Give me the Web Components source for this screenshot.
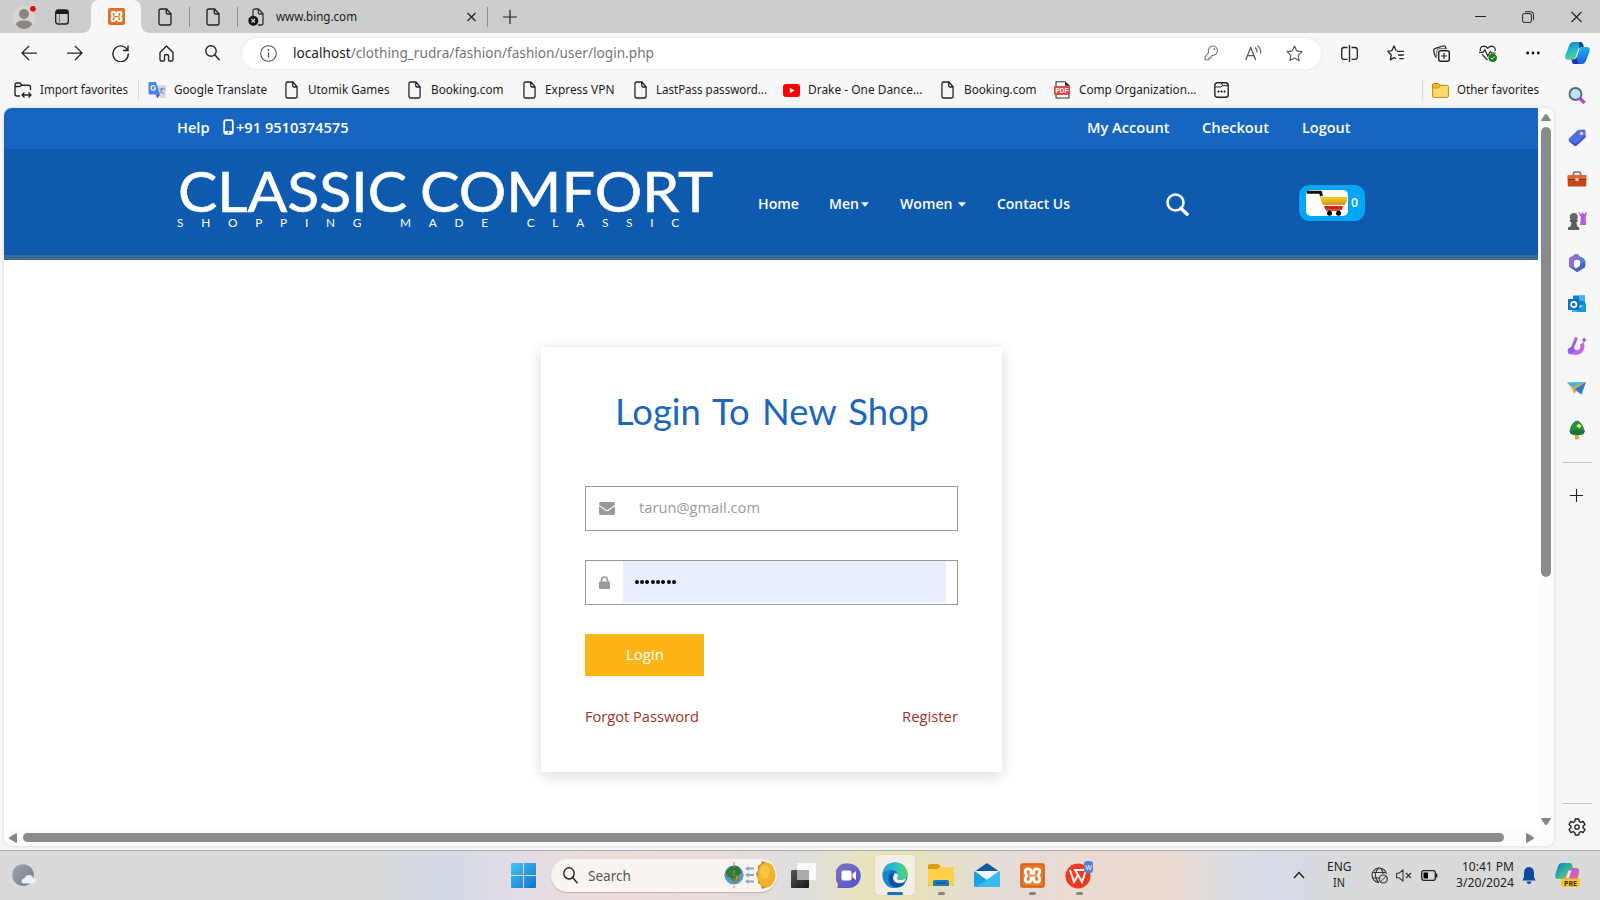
<!DOCTYPE html>
<html lang="en"><head><meta charset="utf-8"><title>Login</title>
<style>
html,body{margin:0;height:100%;overflow:hidden}
body{background:#f7f7f7;font-family:"Noto Sans","Open Sans",sans-serif}
</style></head><body>
<browser-window></browser-window>
<script>
const I={
avatar:[24,24,'<circle cx="12" cy="12.500" r="11.300" fill="#d9d6cf"/><circle cx="12" cy="9" r="5" fill="#8b8682"/><path d="M4 19.500Q4 15.500 12 15.500t8 4Q16.500 24 12 24t-8-4.500Z" fill="#8b8682"/><circle cx="21" cy="3.800" r="3.500" fill="#d40f18" stroke="#f0e5e5"/>'],
tabs:[14,16,'<rect x=".7" y="1" width="12.600" height="14" rx="2.500" fill="none" stroke="#1b1b1b" stroke-width="1.300"/><path d="M1 5V3q0-2 2-2h8q2 0 2 2v2Z" fill="#1b1b1b"/><path d="M4.500 5v10" stroke="#777"/>'],
xampp:[17,17,'<rect width="17" height="17" rx="2" fill="#e9782d"/><rect x="1" y="1" width="15" height="15" rx="1.500" fill="none" stroke="#d5641f"/><path d="M5.500 4Q3 4 3.700 6.500q.3 1 1 2-1 1-1 2Q3 13 5.500 13q2 0 2-1.500V10h2v1.500q0 1.500 2 1.500Q14 13 13.300 10.500q0-1-1-2 .7-1 1-2Q14 4 11.500 4q-2 0-2 1.500V7h-2V5.500Q7.500 4 5.500 4Z" fill="none" stroke="#fff" stroke-width="1.900"/>'],
doc:[14,18,'<path d="M3 1h5.500L13 5.800V15q0 2-2 2H3q-2 0-2-2V3q0-2 2-2ZM8.300 1.200V4.500q0 1.500 1.500 1.500H13" fill="none" stroke="#222" stroke-width="1.350"/>'],
docx:[16,18,'<path d="M5 8V3q0-2 2-2h3.500L15 5.800V15q0 2-2 2H10M10.300 1.200V4.500q0 1.500 1.500 1.500H15" fill="none" stroke="#333" stroke-width="1.300"/><circle cx="5.300" cy="12.700" r="5" fill="#111"/><path d="m3.500 11 3.500 3.500m0-3.500-3.500 3.500" stroke="#ddd" stroke-width="1.200"/>'],
x:[9,10,'<path d="m.5 1 8 8m0-8-8 8" stroke="#222" stroke-width="1.300"/>'],
plus:[14,14,'<path d="M7 0v14M0 7h14" stroke="#222" stroke-width="1.200"/>'],
min:[11,11,'<path d="M0 5.500h11" stroke="#222"/>'],
max:[12,12,'<rect x=".6" y="2.600" width="8.800" height="8.800" rx="1.500" fill="none" stroke="#222"/><path d="M3 .7h5.500q3 0 3 3V9" fill="none" stroke="#222"/>'],
close:[11,12,'<path d="m.5 1 10 10m0-10-10 10" stroke="#222" stroke-width="1.100"/>'],
back:[16,16,'<path d="M16 8H1m7-7L1 8l7 7" fill="none" stroke="#222" stroke-width="1.250"/>'],
fwd:[16,16,'<path d="M0 8h15M8 1l7 7-7 7" fill="none" stroke="#222" stroke-width="1.250"/>'],
reload:[17,18,'<path d="M15.800 7A7.700 7.900 0 1 0 16.300 9.500M16 1.500V6.500H11" fill="none" stroke="#222" stroke-width="1.400"/>'],
home:[15,17,'<path d="M1 7.500 7.500 1 14 7.500V14.500q0 1.500-1.500 1.500H10.500q-1 0-1-1V11q0-1.500-2-1.500t-2 1.500v4q0 1-1 1H2.500Q1 16 1 14.500Z" fill="none" stroke="#222" stroke-width="1.350" stroke-linejoin="round"/>'],
mag:[15,16,'<circle cx="6" cy="6" r="5.200" fill="none" stroke="#222" stroke-width="1.400"/><path d="m9.800 9.800 4.700 5.500" stroke="#222" stroke-width="1.400"/>'],
info:[17,17,'<circle cx="8.500" cy="8.500" r="7.800" fill="none" stroke="#555" stroke-width="1.100"/><path d="M8.500 7.500v5" stroke="#555" stroke-width="1.300"/><circle cx="8.500" cy="5" r=".9" fill="#555"/>'],
key:[14,16,'<path d="M4.800 7.500A4.500 4.700 0 1 1 8.300 10.300L7 11.500V13H5v1.800H1V12Z" fill="none" stroke="#777" stroke-width="1.100" stroke-linejoin="round"/><circle cx="10.300" cy="4.300" r="1" fill="#777"/>'],
aloud:[17,16,'<path d="m.7 15 5-12.500L10.700 15M2.500 10.500h6.500" fill="none" stroke="#555" stroke-width="1.250"/><path d="M10 2.500q2.300 1.500 2 5M12.500.8q3.600 2.500 3.200 7.700" fill="none" stroke="#666" stroke-width="1.200"/>'],
star:[17,17,'<path d="m8.500 1 2.300 4.900 5.200.7-3.800 3.700.9 5.300-4.600-2.500-4.600 2.500.9-5.300L1 6.600l5.200-.7Z" fill="none" stroke="#555" stroke-width="1.100" stroke-linejoin="round"/>'],
split:[17,17,'<path d="M6.500 2.500H3q-2.300 0-2.300 2.300V12q0 2.300 2.300 2.300H6.500M10.500 2.500H14q2.300 0 2.300 2.300V12q0 2.300-2.300 2.300H10.500M8.500 0v17" fill="none" stroke="#222" stroke-width="1.300"/>'],
favs:[17,16,'<path d="m9.300 6-2.300-5-2.200 4.700L.8 6.300l3.400 3.600-.8 5L7 12.500l2 1.200M10 6.300h6.800M11 10h5.800M12.300 13.600h4.500" fill="none" stroke="#222" stroke-width="1.300" stroke-linejoin="round"/>'],
coll:[17,17,'<rect x="5.700" y="5.700" width="10.600" height="10.600" rx="2" fill="none" stroke="#222" stroke-width="1.400"/><path d="M11 8v6M8 11h6M3.800 12.500Q2.500 12 2 10.500L.8 6Q.3 4 2.300 3.400L10 1q2-.6 2.500 1l.6 1.700" fill="none" stroke="#222" stroke-width="1.200"/><path d="M3.700 11V6q0-2.300 2.300-2.300h8" fill="none" stroke="#555" stroke-width=".9"/>'],
heart:[18,17,'<path d="M8.500 15 3 9.300M1.300 6Q.7 1.500 4.800 1.200 7 1.200 8.700 3.300 10.500 1.200 12.700 1.200 16.700 1.500 16.200 6M0 7.300h4l1.800-2.600 3 6.300 2.500-4.500 1.200 1.500h4" fill="none" stroke="#222" stroke-width="1.200"/><circle cx="13.700" cy="12.700" r="4.300" fill="#157c1c"/><path d="m11.700 12.700 1.400 1.500 2.500-2.700" fill="none" stroke="#fff"/>'],
dots:[14,4,'<circle cx="1.700" cy="2" r="1.400"/><circle cx="7" cy="2" r="1.400"/><circle cx="12.300" cy="2" r="1.400"/>'],
copilot:[25,24,'<linearGradient id="a" x2=".4" y2="1"><stop stop-color="#1565d8"/><stop offset=".45" stop-color="#1bb5cf"/><stop offset="1" stop-color="#55d68c"/></linearGradient><linearGradient id="b" y1="0" x2=".3" y2="1"><stop stop-color="#25c5f4"/><stop offset="1" stop-color="#1662e8"/></linearGradient><path d="M8 1h7q2 0 2.500 2L18.500 6h-2.500q-2 0-2.700 2l-3 9q-.7 1.800-2.500 1.800H3Q-.6 18.500.3 14.500L4.500 3.500Q5.500 1 8 1Z" fill="url(#a)"/><path d="M17 23h-7q-2 0-2.500-2L6.500 18.500H9q2 0 2.500-2l3-8.500q.7-2 2.500-2h5Q25.500 6 24.700 10L20.500 20.500Q19.500 23 17 23Z" fill="url(#b)"/><path d="M8.500 23q-1.500-.5-2-4.500h2q2 0 3-2l2 6.500Z" fill="#1b3c9d"/><path d="M14 1h2q1.700 0 2.300 3l.5 2h-2.300q-1.500 0-2.500 2Z" fill="#1444a5"/>'],
import:[18,18,'<path d="M6 15H3q-2 0-2-2V4q0-2 2-2h3l2 2.200h6.500q2 0 2 2V9M1 5.500h4.500L8 4.200" fill="none" stroke="#222" stroke-width="1.350"/><path d="M8 14h9M10.500 11.500 8 14l2.500 2.500m4-5L17 14l-2.500 2.500" fill="none" stroke="#222" stroke-width="1.300"/>'],
gt:[18,18,'<rect x="7" y="4" width="11" height="13" fill="#d5d9df"/><path d="M1 1h7l4 12.500H2q-1.500 0-1.500-1.500V2Q.5 1 1 1Z" fill="#4a86e8"/><path d="M8 13.500h4L9.500 17Z" fill="#2c57c7"/><path d="M7 5.500A2.300 2.300 0 1 0 7.500 7H5.500" fill="none" stroke="#fff" stroke-width="1.100"/><path d="M11.500 8h5.500M14 6.500V8q-.5 3-2 4.500M12.500 9.500q1.500 2.500 3.500 3" fill="none" stroke="#6b84a5"/>'],
yt:[17,13,'<rect width="17" height="13" rx="3" fill="#f00"/><path d="M6.800 3.800v5.400L11.300 6.500Z" fill="#fff"/>'],
pdf:[16,18,'<path d="M2 .7h9L15 4.500V17H2Z" fill="#f7f7f7" stroke="#333" stroke-width="1.100"/><path d="M11 .7v4h4Z" fill="#222"/><rect y="5" width="16" height="9" rx="1" fill="#e04848"/><text x="8" y="12" text-anchor="middle" font-size="6.500" font-weight="700" fill="#fff" font-family="Liberation Sans">PDF</text>'],
box:[15,16,'<rect x=".8" y=".8" width="13.400" height="14.400" rx="2.500" fill="none" stroke="#222" stroke-width="1.400"/><path d="M1 5h6l1.500-1.500L7.500 1M8 3.700h6" stroke="#222" fill="none"/><circle cx="4.500" cy="9.500" r="1"/><circle cx="7.500" cy="9.500" r="1"/><circle cx="10.500" cy="9.500" r="1"/>'],
folder:[17,15,'<path d="M.6 2Q.6.6 2 .6h4.300L8.500 2.300H15q1.400 0 1.400 1.400V13q0 1.400-1.400 1.400H2Q.6 14.400.6 13Z" fill="#ffd96b" stroke="#bc8a18"/><path d="M.6 5h5.700L8.500 2.300 6.300.6H2Q.6.6.6 2Z" fill="#efb72d" stroke="#bc8a18" stroke-width=".8"/>'],
phone:[11,16,'<rect x="1.200" y="1.200" width="8.600" height="13.600" rx="1.500" fill="none" stroke="#fff" stroke-width="1.800"/><path d="M1 12h9v3H1Z" fill="#fff"/><circle cx="5.500" cy="13.500" r=".9" fill="#1665c0"/>'],
caret:[8,5,'<path d="M0 .3h8L4 4.800Z" fill="#fff"/>'],
search:[23,23,'<circle cx="9.500" cy="9.500" r="8" fill="none" stroke="#fff" stroke-width="2.600"/><path d="m15 15.500 6 5.500" stroke="#fff" stroke-width="3.600" stroke-linecap="round"/>'],
cart:[42,26,'<rect width="42" height="26" rx="5" fill="#fff"/><path d="M1 2.200H14.500L15.500 6" fill="none" stroke="#111" stroke-width="3"/><path d="M14 7h27.500L41 10H15Z" fill="#f0c61e"/><path d="M15 9.500h26v2.500H15.500Z" fill="#e6b51c"/><path d="M15.500 12h24.500l-1 3H17Z" fill="#dc9f1c"/><path d="M18 16h19l-1 3.700H19.500Z" fill="#d31f1d"/><path d="M20 20.500h14" stroke="#a34a38"/><circle cx="23.500" cy="23.200" r="2.500"/><circle cx="32.500" cy="23.200" r="2.500"/>'],
mail:[16,13,'<path d="M0 1.500Q0 0 1.500 0h13Q16 0 16 1.500 16 3 14.500 4L8 8.300 1.500 4Q0 3 0 1.500Z" fill="#999"/><path d="M0 4.300 7 9q1 .6 2 0l7-4.700v7.200q0 1.500-1.500 1.500h-13Q0 13 0 11.500Z" fill="#999"/>'],
lock:[11,13,'<rect y="5.500" width="11" height="7.500" rx="1" fill="#999"/><path d="M2.500 6V4.300a3 3.300 0 0 1 6 0V6" fill="none" stroke="#999" stroke-width="1.700"/>'],
up:[10,7,'<path d="M5 0q.6 0 1 .6L9.800 6q.3 1-.6 1H.8Q-.1 7 .2 6L4 .6Q4.400 0 5 0Z" fill="#858585"/>'],
down:[10,7,'<path d="M5 7q.6 0 1-.6L9.800 1q.3-1-.6-1H.8Q-.1 0 .2 1L4 6.400Q4.400 7 5 7Z" fill="#858585"/>'],
left:[8,10,'<path d="M0 5q0-.6.6-1L7 .2Q8-.1 8 .8v8.400q0 .9-1 .6L.6 6Q0 5.600 0 5Z" fill="#858585"/>'],
right:[8,10,'<path d="M8 5q0-.6-.6-1L1 .2Q0-.1 0 .8v8.400q0 .9 1 .6L7.400 6Q8 5.600 8 5Z" fill="#858585"/>'],
s1:[20,20,'<circle cx="8.500" cy="8" r="6" fill="#c1e2f4" stroke="#596571" stroke-width="1.800"/><path d="m12.500 12 5 5" stroke="#b445dc" stroke-width="3.300"/>'],
s2:[20,20,'<path d="M11 2 17 1.500Q18.500 1.500 18.500 3V9L9.500 17.500Q8 18.500 6.500 17L2 13Q1 11.500 2 10.500Z" fill="#4a6fe8"/><path d="m2 12 7 4L18.500 7V9.500L9.500 17.500Q8 18.500 6.500 17L2 13Z" fill="#4449bb"/><circle cx="14.500" cy="5.500" r="1.800" fill="#ffd65c"/>'],
s3:[20,20,'<path d="M6.500 6V4.500Q6.500 3 8 3h4q1.500 0 1.500 1.500V6" fill="none" stroke="#777" stroke-width="1.700"/><rect x=".7" y="6" width="18.600" height="11.500" rx="1.500" fill="#c94818"/><path d="M.7 6h18.600v4H.7Z" fill="#dd6632"/><path d="M.7 10.500h18.600" stroke="#8d2c0e"/><circle cx="10" cy="10.500" r="1.800" fill="#e5d6c8"/>'],
s4:[20,20,'<path d="M11.500 1.500h1.700V3h1.500V1.500h1.800V3h1.500V1.500H20L18.500 7l.7 7h-6l.7-7.500Z" fill="#b85ae0"/><circle cx="6.800" cy="6" r="4" fill="#666"/><path d="M3 9h7.600v2H9.300l1 4.500 2 1V19H1v-2.500l2.500-1 1-4.500H3Z" fill="#5c5c5c"/>'],
s5:[20,20,'<path d="M8 1 17 5.500 18.500 8v5l-6-2V8L5.500 4Z" fill="#4f86d0"/><path d="M9.500.8 2 5v8.500l5 2.500V8.500L12 6V2Z" fill="#8d6fd2"/><path d="M2 13.500 10 19.200l8-4.700V9l-5 1.500v2.500L9 15.200l-2-1.200Z" fill="#4a63c0"/><circle cx="10" cy="10" r="3.200" fill="#f7f7f7"/>'],
s6:[20,20,'<path d="M6 1.500h12v10H6Z" fill="#1680d1"/><path d="M12 1.500h6V7h-6Z" fill="#42b5ee"/><path d="M5 9l7 5 7-5v9H5Z" fill="#33bcee"/><path d="M19 9v9H9Z" fill="#1499dc"/><rect x="1" y="5" width="11.500" height="11" rx="1" fill="#116ec0"/><circle cx="6.700" cy="10.500" r="2.700" fill="none" stroke="#fff" stroke-width="1.700"/>'],
s7:[20,20,'<path d="M3 11q-1.500 8 5.500 8 8.500-.5 9-9l-1-4-3.500 2.500q1.500 5-3 5.500-3 0-3-3Z" fill="#c563ed"/><path d="M9.500 1.500 4 15" stroke="#9c5fe0" stroke-width="3"/><circle cx="4" cy="15" r="3.300" fill="#8765ea"/><path d="m17 1 1 2.300 2 .7-2 .8-1 2.200-.8-2.200-2-.8 2-.7Z" fill="#834fd0"/>'],
s8:[20,20,'<path d="M0 4.500 19 4 6 12Z" fill="#ffc34c"/><path d="M0 4.500 19 4 5 9.500Z" fill="#40b3e8"/><path d="M19 4 14.500 16.500 6.500 11Z" fill="#267fd0"/><path d="m5 9.500 2 6.500 3-3.500L8 11l11-7Z" fill="#e8a234"/>'],
s9:[20,20,'<path d="M8 13h4v6q-2 1-4 0Z" fill="#e9a33a"/><path d="M10 .5Q15 2 17 9q1.500 5-3 5.500H6Q1.500 14 3 9 5 2 10 .5Z" fill="#219144"/><path d="M10 10q5 1 8 0-.5 5-5 5H7q-4-1-4.500-4Z" fill="#147638"/><path d="m12 3.500 1.500 1.500L15 6l-1.500 1L12 8.500 10.500 7 9 6l1.500-1Z" fill="#ffdb57"/>'],
gear:[18,18,'<path d="M7.300 1h3.400l.6 2.500 1.400.8 2.500-.8 1.700 2.900L15 8.200v1.600l1.900 1.800-1.700 2.900-2.500-.8-1.400.8-.6 2.500H7.300l-.6-2.500-1.400-.8-2.500.8-1.700-2.900L3 9.800V8.200L1.100 6.400l1.700-2.900 2.500.8 1.400-.8Z" fill="none" stroke="#222" stroke-width="1.400" stroke-linejoin="round"/><circle cx="9" cy="9" r="2.200" fill="none" stroke="#222" stroke-width="1.300"/>'],
weather:[24,24,'<linearGradient id="c" y2="1"><stop stop-color="#9ba7b2"/><stop offset="1" stop-color="#727b86"/></linearGradient><circle cx="11" cy="12" r="10.800" fill="url(#c)"/><path d="M12 20.500q-3-.3-2.500-3 .7-2.300 3-2.200Q13.500 12 17 12t4 3q3 0 3 2.800-.3 2.500-3 2.700Z" fill="#edf0f4"/>'],
win:[25,25,'<linearGradient id="d" gradientUnits="userSpaceOnUse" x2="25" y2="25"><stop stop-color="#49c8f5"/><stop offset="1" stop-color="#0c6fc8"/></linearGradient><path d="M0 1q0-1 1-1h11v12H0ZM13 0h11q1 0 1 1v11H13ZM0 13h12v12H1q-1 0-1-1ZM13 13h12v11q0 1-1 1H13Z" fill="url(#d)"/>'],
art:[52,28,'<circle cx="10" cy="14" r="9.500" fill="#4c9cca"/><path d="M6 6q5-3 9 0l3 6-4 2 1 5-5 3-3-5-5-2Q1 10 6 6Z" fill="#2c7b34"/><path d="M12 14l3 3-4 5Z" fill="#b8913b"/><path d="M10 1v26" stroke="#df7364" stroke-dasharray="6 2"/><path d="M0 14h4m12 0h4" stroke="#df7364"/><path d="M23 7.500h7M23 14h7M23 20.500h7" stroke="#8aa6c4" stroke-width="2"/><path d="M21 7.500l3.500-2.500v5ZM21 14l3.500-2.500v5ZM21 20.500l3.500-2.500v5Z" fill="#8aa6c4"/><path d="m38 0-1 3-3 2v4l-2 4 2 5v4l3 2 1 4 5-2V2Z" fill="#dc7428"/><ellipse cx="42.500" cy="14" rx="9" ry="12.500" fill="#f2b32c"/><ellipse cx="41" cy="11" rx="5" ry="7" fill="#f8c644"/>'],
task:[25,25,'<linearGradient id="e" y2="1"><stop stop-color="#555"/><stop offset="1" stop-color="#171717"/></linearGradient><rect y="7" width="18" height="18" rx="1" fill="url(#e)"/><rect x="6" width="19" height="17" rx="1" fill="#fafafa"/><path d="M6 7h12v10H6Z" fill="#aaa"/>'],
chat:[25,25,'<linearGradient id="f" y2="1"><stop stop-color="#8175c2"/><stop offset="1" stop-color="#5053c0"/></linearGradient><path d="M12.500.5a12 12 0 0 1 0 24.500H1q1.200-2 .6-5A12 12 0 0 1 12.500.5Z" fill="url(#f)"/><rect x="5.500" y="7.500" width="10" height="10" rx="2" fill="#fff"/><path d="m16.500 11 3.500-3v9l-3.500-3Z" fill="#fff"/>'],
edge:[26,26,'<linearGradient id="g"><stop stop-color="#269ed8"/><stop offset=".55" stop-color="#2dc3c4"/><stop offset="1" stop-color="#5bd75d"/></linearGradient><circle cx="13" cy="13" r="12.500" fill="#1470c0"/><path d="M.6 12Q2 .5 13 .5T25.500 11.500Q25.500 18 19 18q-4 0-4-2 1-1 1-3-.5-4.500-6-5Q3 8 .6 12Z" fill="url(#g)"/><path d="M10 8.500Q4 12 7 19q3 6 9.500 6Q5 29 1 17-.5 9 10 8.500Z" fill="#1a86d4"/><path d="M12 11q-3 5 1 9 5 3.500 10.500.5-4.500 6.500-11.500 4.500Q3 20 9 11.500Z" fill="#134f99"/><path d="M12.500 11.500q3.500-1 3.500 2 0 1.500-1 2.500 0 2 4 2 3 0 5-1.700-1 5-6 4.700-7 0-7-5.500Z" fill="#f2efe4"/>'],
files:[26,22,'<path d="M0 2Q0 0 2 0h8l3 3h11q2 0 2 2v17H0Z" fill="#d99e16"/><path d="M0 5h10l2-2h12q2 0 2 2v15q0 2-2 2H2q-2 0-2-2Z" fill="#fdd04a"/><path d="M5 22v-4q0-2 2-2h12q2 0 2 2v4Z" fill="#167bbf"/><path d="M8 19h10" stroke="#0b5589" stroke-width="1.500"/>'],
mailbox:[26,24,'<path d="M0 9 13 0l13 9v4H0Z" fill="#1259a2"/><path d="M0 8h26L13 17Z" fill="#eff5f8"/><path d="M0 8l13 9L26 8v14q0 2-2 2H2q-2 0-2-2Z" fill="#1da0e4"/><path d="M2 24 26 8v14q0 2-2 2Z" fill="#37bbf0"/>'],
wps:[28,28,'<circle cx="13" cy="15" r="12.500" fill="#f13a22"/><path d="m5 9 4 12 4-7 4 7 4-12H10l3 5" fill="none" stroke="#fff" stroke-width="1.900"/><rect x="19" y="0" width="9" height="12" rx="3" fill="#4f83d8"/><text x="23.500" y="9" text-anchor="middle" font-size="7" fill="#fff" font-family="Liberation Sans">W</text>'],
chev:[12,8,'<path d="m1 7 5-5.500L11 7" fill="none" stroke="#222" stroke-width="1.500"/>'],
globe:[17,17,'<path d="M15.500 7A7.300 7.300 0 1 0 8 15.600M1.500 5.500h13M1.500 11H8M8.300.8Q4 4 4.500 9 5 13 7.500 15.500M8.300.8Q12 3 12 7" fill="none" stroke="#333" stroke-width="1.100"/><circle cx="12.300" cy="12" r="4" fill="#dadada" stroke="#333" stroke-width="1.200"/><path d="m9.500 14.800 5.600-5.600" stroke="#333"/>'],
mute:[16,13,'<path d="M.6 4.200h2.600L7 .8v11.400L3.200 8.800H.6Z" fill="none" stroke="#333" stroke-width="1.100" stroke-linejoin="round"/><path d="m10 4 5 5m0-5-5 5" stroke="#333" stroke-width="1.200"/>'],
batt:[17,11,'<rect x=".7" y=".7" width="13.600" height="9.600" rx="2" fill="none" stroke="#222" stroke-width="1.300"/><rect x="2.500" y="2.500" width="4.500" height="6"/><path d="M15.500 3.500v4" stroke="#222" stroke-width="1.800"/>'],
bell:[14,17,'<path d="M7 0Q2 .5 2 6v4L.3 13.500h13.400L12 10V6Q12 .5 7 0ZM4.500 14.500h5Q9 17 7 17t-2.500-2.500Z" fill="#0c4a9a"/>'],
pre:[25,24,'<linearGradient id="h" y2="1"><stop stop-color="#1a68d8"/><stop offset=".5" stop-color="#28b99c"/><stop offset="1" stop-color="#e8b32c"/></linearGradient><linearGradient id="i" y2="1"><stop stop-color="#a05be8"/><stop offset="1" stop-color="#ee6b8d"/></linearGradient><path d="M14 5h7q4 0 3 5l-2 7H9Z" fill="url(#i)"/><path d="M7 0h8q2 0 2.500 3l.7 2.500H15.500q-1.500 0-2 1.500L11 14q-.7 2-2.500 2H3Q-.8 16 .5 11L3 3.500Q4 0 7 0Z" fill="url(#h)"/><path d="m13.500 7.500-2.500 7.500h3l2.500-7.500Z" fill="#eee8f0"/><rect x="6" y="15.500" width="19" height="8.500" rx="2" fill="#f9c62c"/><text x="15.500" y="22.500" text-anchor="middle" font-size="7" font-weight="700" fill="#3b2a00" font-family="Noto Sans">PRE</text>'],
};
class UiIcon extends HTMLElement{
 connectedCallback(){
  const d=I[this.getAttribute('name')],w=this.getAttribute('w')||d[0],h=this.getAttribute('h')||d[1];
  this.attachShadow({mode:'open'}).innerHTML=`<style>:host{display:block;flex:none;width:${w}px;height:${h}px;margin-left:${this.getAttribute('gap')||0}px}svg{display:block;width:100%;height:100%}</style><svg viewBox="0 0 ${d[0]} ${d[1]}" preserveAspectRatio="none">${d[2]}</svg>`;
 }}
customElements.define('ui-icon',UiIcon);
/* A label that condenses or widens its text to an exact measure. */
class FitText extends HTMLElement{
 connectedCallback(){
  const w=+this.getAttribute('w');
  this.attachShadow({mode:'open'}).innerHTML=`<style>:host{display:block;flex:none;width:${w}px;margin-left:${this.getAttribute('gap')||0}px;white-space:nowrap}span{display:inline-block;transform-origin:0 50%}</style><span><slot></slot></span>`;
  const s=this.shadowRoot.querySelector('span');
  s.style.transform=`scaleX(${w/s.getBoundingClientRect().width})`;
 }}
customElements.define('fit-text',FitText);
const make=(name,html)=>customElements.define(name,class extends HTMLElement{
 connectedCallback(){if(!this.shadowRoot)this.attachShadow({mode:'open'}).innerHTML=html}});
make('ui-rule','<style>:host{display:block;flex:none;width:1px;height:20px;background:#8f8f8f}</style>');
make('tab-bar',`<style>:host{display:flex;align-items:center;height:33px;padding:0 18.500px 0 11.500px;box-sizing:border-box;background:#cdcdcd;font-size:13px;color:#1b1b1b}
fit-text{margin-bottom:2px}
.active{width:50px;height:33px;margin-left:22px;background:#f7f7f7;border-radius:8px 8px 0 0;display:flex;align-items:center;position:relative}
.active:before,.active:after{content:"";position:absolute;bottom:0;width:8px;height:8px}
.active:before{left:-8px;background:radial-gradient(circle at 0 0,transparent 7.500px,#f7f7f7 8px)}
.active:after{right:-8px;background:radial-gradient(circle at 100% 0,transparent 7.500px,#f7f7f7 8px)}
.sp{flex:1}</style>
<ui-icon name="avatar"></ui-icon><ui-icon name="tabs" gap="19.5"></ui-icon><div class="active"><ui-icon name="xampp" gap="16.5"></ui-icon></div>
<ui-icon name="doc" gap="17"></ui-icon><ui-rule style="margin-left:17px"></ui-rule><ui-icon name="doc" gap="16"></ui-icon><ui-rule style="margin-left:17px"></ui-rule>
<ui-icon name="docx" gap="10"></ui-icon><fit-text w="81" gap="12">www.bing.com</fit-text><ui-icon name="x" gap="109.5"></ui-icon><ui-rule style="margin-left:11px"></ui-rule><ui-icon name="plus" gap="15"></ui-icon>
<div class="sp"></div><ui-icon name="min"></ui-icon><ui-icon name="max" gap="36"></ui-icon><ui-icon name="close" gap="37"></ui-icon>`);
make('tool-bar',`<style>:host{display:flex;align-items:center;height:40px;padding-left:21px;box-sizing:border-box;font-size:15px;color:#222}
.url{flex:none;width:1079px;height:31px;margin-left:22px;background:#fff;border-radius:16px;box-shadow:0 0 3px #e2e2e2;display:flex;align-items:center;box-sizing:border-box;padding:0 18px 0 18px}
fit-text{margin-bottom:1.500px}
i{font-style:normal;color:#767676}.sp{flex:1}</style>
<ui-icon name="back"></ui-icon><ui-icon name="fwd" gap="30"></ui-icon><ui-icon name="reload" gap="29"></ui-icon><ui-icon name="home" gap="30"></ui-icon><ui-icon name="mag" gap="31"></ui-icon>
<div class="url"><ui-icon name="info"></ui-icon><fit-text w="361" gap="15.5">localhost<i>/clothing_rudra/fashion/fashion/user/login.php</i></fit-text><div class="sp"></div><ui-icon name="key"></ui-icon><ui-icon name="aloud" gap="27"></ui-icon><ui-icon name="star" gap="24"></ui-icon></div>
<ui-icon name="split" gap="20"></ui-icon><ui-icon name="favs" gap="29"></ui-icon><ui-icon name="coll" gap="29"></ui-icon><ui-icon name="heart" gap="29"></ui-icon><ui-icon name="dots" gap="29"></ui-icon><ui-icon name="copilot" gap="25"></ui-icon>`);
make('favorites-bar',`<style>:host{display:flex;align-items:center;height:35px;padding:0 15px 1px 14px;box-sizing:border-box;font-size:12.500px;color:#1b1b1b}ui-rule{background:#dadada}.sp{flex:1}fit-text{margin-bottom:1px}</style>
<ui-icon name="import"></ui-icon><fit-text w="88" gap="7.5">Import favorites</fit-text><ui-rule style="margin-left:10.500px"></ui-rule>
<ui-icon name="gt" gap="9"></ui-icon><fit-text w="93" gap="7.5">Google Translate</fit-text>
<ui-icon name="doc" w="13" gap="18.5"></ui-icon><fit-text w="81.5" gap="10">Utomik Games</fit-text>
<ui-icon name="doc" w="13" gap="18.5"></ui-icon><fit-text w="72.5" gap="9.5">Booking.com</fit-text>
<ui-icon name="doc" w="13" gap="19.5"></ui-icon><fit-text w="69.5" gap="9.5">Express VPN</fit-text>
<ui-icon name="doc" w="13" gap="19"></ui-icon><fit-text w="111" gap="9">LastPass password...</fit-text>
<ui-icon name="yt" gap="16.5"></ui-icon><fit-text w="114.5" gap="7.5">Drake - One Dance...</fit-text>
<ui-icon name="doc" w="13" gap="19"></ui-icon><fit-text w="72.5" gap="10">Booking.com</fit-text>
<ui-icon name="pdf" gap="17.5"></ui-icon><fit-text w="117.500" gap="8.5">Comp Organization...</fit-text>
<ui-icon name="box" gap="17.5"></ui-icon><div class="sp"></div><ui-rule></ui-rule><ui-icon name="folder" gap="9"></ui-icon><fit-text w="82" gap="8">Other favorites</fit-text>`);
make('site-header',`<style>:host{display:block;color:#fff;font-family:"Open Sans","Noto Sans",sans-serif;font-weight:600;font-size:14.500px}
.top{display:flex;align-items:center;height:41px;padding:0 188px 3px 173px;box-sizing:border-box;background:#1665c0}.sp{flex:1}
.main{display:flex;align-items:center;height:111px;padding-left:174px;background:#0d5aaf;border-bottom:5px solid #3c6a93;box-sizing:border-box;font-size:13.500px}
.main>fit-text{margin-top:3px}.main>ui-icon{margin-top:5px}
.logo{width:535px;height:64px;font-family:Lato,sans-serif}
.name{display:flex;font-size:57px;line-height:46px;height:48px;margin-top:-3px;font-weight:400;-webkit-text-stroke:.6px #fff}
.tag{font-size:12px;line-height:16px;height:18px;font-weight:400;letter-spacing:18px;margin-left:-1px}
.cart{display:flex;align-items:center;width:66px;height:36px;box-sizing:border-box;margin:2px 0 0 110px;padding-left:7px;background:#03a5f5;border-radius:10px;font-size:12px}.cart fit-text{margin-bottom:2px}</style>
<div class="top"><fit-text w="32.5">Help</fit-text><ui-icon name="phone" gap="13.5"></ui-icon><fit-text w="112.5" gap="1.5">+91 9510374575</fit-text><div class="sp"></div><fit-text w="82.5">My Account</fit-text><fit-text w="67" gap="32.5">Checkout</fit-text><fit-text w="48.5" gap="33">Logout</fit-text></div>
<div class="main"><div class="logo"><div class="name"><fit-text w="229">CLASSIC</fit-text><fit-text w="293" gap="13">COMFORT</fit-text></div><div class="tag"><fit-text w="520">SHOPPING MADE CLASSIC</fit-text></div></div>
<fit-text w="41" gap="44.5">Home</fit-text><fit-text w="30" gap="30.5">Men</fit-text><ui-icon name="caret" gap="1.5"></ui-icon><fit-text w="52.5" gap="31.5">Women</fit-text><ui-icon name="caret" gap="5.5"></ui-icon><fit-text w="73" gap="31">Contact Us</fit-text><ui-icon name="search" gap="95.5"></ui-icon><div class="cart"><ui-icon name="cart"></ui-icon><fit-text w="7" gap="3">0</fit-text></div></div>`);
make('login-card',`<style>:host{display:block;width:461px;height:425px;margin:87px 0 0 537px;padding:0 44px;box-sizing:border-box;background:#fff;box-shadow:0 3px 14px rgba(0,0,0,.15);font-family:"Open Sans","Noto Sans",sans-serif;font-size:15px;color:#a23129}
h1{margin:0;padding:38px 0 0 29.500px;height:101px;font:400 37px/51px Lato,sans-serif;word-spacing:3px;color:#1d66bd;display:flex}
.f{display:flex;align-items:center;height:45px;box-sizing:border-box;border:1px solid #999;margin-bottom:29px;color:#999;padding-left:13px;width:373px}
.f>fit-text{margin-bottom:3px}
.pw{flex:none;margin:0 0 1px 13px;width:323px;height:42px;background:#e8f0fe;display:flex;align-items:center;gap:1.400px;padding-left:11.500px;box-sizing:border-box}
.pw b{width:4px;height:4px;border-radius:50%;background:#000}
.btn{display:flex;align-items:center;justify-content:center;width:119px;height:42px;padding-bottom:2px;box-sizing:border-box;background:#fdb515;color:#fff;margin-bottom:30px}
.links{display:flex;justify-content:space-between;width:372.500px}</style>
<h1><fit-text w="314">Login To New Shop</fit-text></h1>
<div class="f"><ui-icon name="mail"></ui-icon><fit-text w="121" gap="24">tarun@gmail.com</fit-text></div>
<div class="f"><ui-icon name="lock"></ui-icon><div class="pw"><b></b><b></b><b></b><b></b><b></b><b></b><b></b><b></b></div></div>
<div class="btn"><fit-text w="38">Login</fit-text></div>
<div class="links"><fit-text w="114">Forgot Password</fit-text><fit-text w="56">Register</fit-text></div>`);
make('page-view',`<style>:host{display:grid;grid-template-columns:1534px 16px;grid-template-rows:722px 16px;width:1550px;height:738px;margin-left:4px;background:#fff;border-radius:8px;overflow:hidden;box-shadow:0 0 3px #ccc}
.v{display:flex;flex-direction:column;align-items:center;padding:6px 0 5px;background:#fcfcfc;box-sizing:border-box;justify-content:space-between}
.v i{width:10px;height:450px;border-radius:5px;background:#8b8b8b;margin:6px 0 auto}
.h{grid-column:1/3;display:flex;align-items:center;padding:0 20px 1px 5px;background:#fcfcfc;justify-content:space-between}
.h i{width:1481px;height:9.500px;border-radius:5px;background:#8b8b8b;margin:0 auto 0 6px}</style>
<div><site-header></site-header><login-card></login-card></div><div class="v"><ui-icon name="up"></ui-icon><i></i><ui-icon name="down"></ui-icon></div>
<div class="h"><ui-icon name="left"></ui-icon><i></i><ui-icon name="right"></ui-icon></div>`);
make('side-bar',`<style>:host{display:flex;flex-direction:column;align-items:center;height:777px;padding:13px 1px 14px 0;box-sizing:border-box}ui-icon{margin-bottom:21.700px}hr{width:30px;border:0;height:1px;background:#c4c4c4;margin:1px 0 26px}hr.b{margin:auto 0 14px}ui-icon:last-child{margin:0}</style>
${[1,2,3,4,5,6,7,8,9].map(n=>`<ui-icon name="s${n}"></ui-icon>`).join('')}<hr><ui-icon name="plus" w="13" h="13"></ui-icon><hr class="b"><ui-icon name="gear"></ui-icon>`);
make('task-bar',`<style>:host{display:flex;align-items:center;height:50px;box-sizing:border-box;border-top:1px solid #adadad;padding:0 20.500px 1px 12px;background:linear-gradient(90deg,#dadada 0,#d9dadb 370px,#d3dae4 450px,#e2dce6 515px,#ecdcd7 620px,#e6ddda 740px,#dedede 800px,#e7e3c0 860px,#e8e2b6 905px,#e3dfcc 960px,#e5dcd8 1010px,#ecdad2 1090px,#eadad0 1170px,#d9dce3 1240px,#d5dbe6 1280px,#d9dadb 1330px,#dadada);font-size:12.500px;color:#222}
.search{display:flex;align-items:center;width:226px;height:33px;margin-left:15px;padding:0 1px 0 12px;box-sizing:border-box;border-radius:17px;background:#f8f4f2;box-shadow:0 1px 1px #bcb2b2;font-size:14.500px;color:#555}
.sp{flex:1}.app{display:grid;justify-items:center;align-items:center;position:relative;height:40px;flex:none}
.app:after{content:"";position:absolute;bottom:0;width:7px;height:3.500px;border-radius:2px;background:#8a8483}
.edge{width:40px;margin-left:14px;background:#f2efe5;border-radius:4px;box-shadow:0 0 1px #bbb}.edge:after{width:16px;background:#1a72c3}
.lang{display:grid;justify-items:center;row-gap:0;line-height:16.500px}.time{display:grid;justify-items:end;line-height:16.500px;margin-left:18px}</style>
<ui-icon name="weather"></ui-icon><ui-icon name="win" gap="474.5"></ui-icon>
<div class="search"><ui-icon name="mag" w="15" h="17"></ui-icon><fit-text w="43" gap="10">Search</fit-text><div class="sp"></div><ui-icon name="art"></ui-icon></div>
<ui-icon name="task" gap="14"></ui-icon><ui-icon name="chat" gap="20.5"></ui-icon><div class="app edge"><ui-icon name="edge"></ui-icon></div>
<div class="app" style="margin-left:13px"><ui-icon name="files"></ui-icon></div><ui-icon name="mailbox" gap="19.5"></ui-icon><div class="app" style="margin-left:20px"><ui-icon name="xampp" w="25" h="25"></ui-icon></div><div class="app" style="margin-left:20.500px"><ui-icon name="wps"></ui-icon></div>
<div class="sp"></div><ui-icon name="chev"></ui-icon><div class="lang" style="margin-left:22.500px"><fit-text w="24.5">ENG</fit-text><fit-text w="12">IN</fit-text></div>
<ui-icon name="globe" gap="19"></ui-icon><ui-icon name="mute" gap="8"></ui-icon><ui-icon name="batt" gap="9"></ui-icon><div class="time"><fit-text w="52">10:41 PM</fit-text><fit-text w="58">3/20/2024</fit-text></div><ui-icon name="bell" gap="8.5"></ui-icon><ui-icon name="pre" gap="18.5"></ui-icon>`);
make('browser-window',`<style>:host{display:grid;grid-template-columns:1554px 46px;grid-template-rows:33px 40px 777px 50px;width:1600px;height:900px;overflow:hidden}tab-bar,tool-bar,task-bar{grid-column:1/3}</style>
<tab-bar></tab-bar><tool-bar></tool-bar><div><favorites-bar></favorites-bar><page-view></page-view></div><side-bar></side-bar><task-bar></task-bar>`);
</script></body></html>
